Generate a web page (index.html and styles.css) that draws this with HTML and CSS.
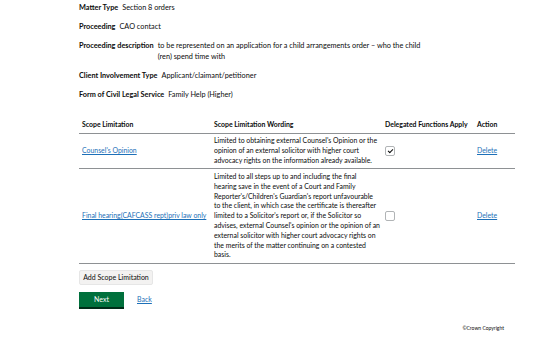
FILE: index.html
```html
<!DOCTYPE html>
<html>
<head>
    <meta charset="utf-8">
    <title>Scope Limitations</title>
    <link rel="stylesheet" href="styles.css">
</head>
<body>
<div class="page">
    <dl class="summary">
        <div class="summary-row">
            <dt>Matter Type</dt>
            <dd>Section 8 orders</dd>
        </div>
        <div class="summary-row">
            <dt>Proceeding</dt>
            <dd>CAO contact</dd>
        </div>
        <div class="summary-row">
            <dt>Proceeding description</dt>
            <dd>to be represented on an application for a child arrangements order – who the child (ren) spend time with</dd>
        </div>
        <div class="summary-row">
            <dt>Client Involvement Type</dt>
            <dd>Applicant/claimant/petitioner</dd>
        </div>
        <div class="summary-row">
            <dt>Form of Civil Legal Service</dt>
            <dd>Family Help (Higher)</dd>
        </div>
    </dl>

    <table class="scope-table">
        <thead>
            <tr>
                <th class="col-limit">Scope Limitation</th>
                <th class="col-wording">Scope Limitation Wording</th>
                <th class="col-delegated">Delegated Functions Apply</th>
                <th class="col-action">Action</th>
            </tr>
        </thead>
        <tbody>
            <tr>
                <td><a href="#">Counsel's Opinion</a></td>
                <td class="wording">Limited to obtaining external Counsel's Opinion or the<br>opinion of an external solicitor with higher court<br>advocacy rights on the information already available.</td>
                <td><input type="checkbox" class="check" checked></td>
                <td><a href="#">Delete</a></td>
            </tr>
            <tr>
                <td><a href="#">Final hearing(CAFCASS rept)priv law only</a></td>
                <td class="wording">Limited to all steps up to and including the final<br>hearing save in the event of a Court and Family<br>Reporter's/Children's Guardian's report unfavourable<br>to the client, in which case the certificate is thereafter<br>limited to a Solicitor's report or, if the Solicitor so<br>advises, external Counsel's opinion or the opinion of an<br>external solicitor with higher court advocacy rights on<br>the merits of the matter continuing on a contested<br>basis.</td>
                <td><input type="checkbox" class="check"></td>
                <td><a href="#">Delete</a></td>
            </tr>
        </tbody>
    </table>

    <button class="btn-secondary">Add Scope Limitation</button>

    <div class="actions">
        <button class="btn-primary">Next</button>
        <a href="#" class="back">Back</a>
    </div>
</div>
<footer class="footer">
    <span>©Crown Copyright</span>
</footer>
</body>
</html>
```

FILE: styles.css
```css
*{
    margin: 0px;
    padding: 0px;
    box-sizing: border-box;
}
body{
    font-family: "Lato", "Liberation Sans", sans-serif;
    font-size: 7.3px;
    line-height: 11px;
    color: #0b0c0c;
    background-color: #ffffff;
}
a{
    color: #1d70b8;
    text-decoration: underline;
}
.page{
    padding: 2px 34px 0px 79px;
}
/*概要列表*/
.summary{
    display: flex;
    flex-direction: column;
    gap: 8px;
}
.summary-row{
    display: flex;
    gap: 4px;
}
.summary-row dt{
    font-weight: bold;
    white-space: nowrap;
}
.summary-row dd{
    max-width: 266px;
}
/*表格*/
.scope-table{
    width: 436px;
    margin-top: 17px;
    border-collapse: collapse;
    table-layout: fixed;
    font-size: 6.9px;
    line-height: 9.8px;
}
.scope-table th{
    text-align: left;
    font-weight: bold;
    padding: 3px 0px 3px 3px;
    border-bottom: 1px solid #8e9194;
}
.scope-table td{
    vertical-align: middle;
    padding: 2.6px 0px 2.6px 3px;
    border-bottom: 1px solid #8e9194;
}
.scope-table .wording{
    white-space: nowrap;
}
.col-limit{ width: 132px; }
.col-wording{ width: 171px; }
.col-delegated{ width: 92px; }
.check{
    appearance: none;
    display: block;
    width: 10px;
    height: 10px;
    border: 1px solid #b1b4b6;
    border-radius: 2px;
    background: #ffffff;
    position: relative;
}
.check:checked::after{
    content: "";
    position: absolute;
    left: 2px;
    top: 2px;
    width: 4px;
    height: 2px;
    border-left: 1.5px solid #0b0c0c;
    border-bottom: 1.5px solid #0b0c0c;
    transform: rotate(-45deg);
}
/*按钮*/
.btn-secondary{
    display: block;
    margin-top: 6px;
    width: 74px;
    height: 15px;
    font-family: "Lato", sans-serif;
    font-size: 7px;
    color: #0b0c0c;
    background: #f3f2f1;
    border: 1px solid #e6e6e6;
    border-radius: 2px;
}
.actions{
    display: flex;
    align-items: center;
    gap: 13px;
    margin-top: 7px;
}
.btn-primary{
    width: 45px;
    height: 15px;
    font-family: "Lato", sans-serif;
    font-size: 7px;
    color: #ffffff;
    background: #00703c;
    border: none;
    box-shadow: 0 2px 0 #002d18;
}
.back{
    font-size: 7px;
}
.footer{
    margin-top: 12px;
    padding-right: 45px;
    height: 20px;
    display: flex;
    justify-content: flex-end;
    align-items: center;
    font-size: 5px;
    border-bottom: 1px solid #eeeeee;
}
```
